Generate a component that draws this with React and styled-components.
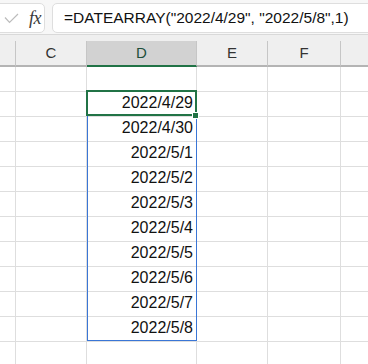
import React from "react";
import styled, { createGlobalStyle } from "styled-components";

const GlobalStyle = createGlobalStyle`
  html, body { margin: 0; padding: 0; background: #fff; }
  body { font-family: "Liberation Sans", Arial, sans-serif; }
`;

const COLS = [
    { name: "", width: 16 },
    { name: "C", width: 71 },
    { name: "D", width: 110, selected: true },
    { name: "E", width: 71 },
    { name: "F", width: 73 },
    { name: "", width: 27 },
];
const template = COLS.map((c) => c.width + "px").join(" ");

const dates = [
    "2022/4/29",
    "2022/4/30",
    "2022/5/1",
    "2022/5/2",
    "2022/5/3",
    "2022/5/4",
    "2022/5/5",
    "2022/5/6",
    "2022/5/7",
    "2022/5/8",
];

const Sheet = styled.div`
    width: 368px;
    height: 364px;
    overflow: hidden;
    background: #fff;
`;

const FormulaBar = styled.div`
    display: flex;
    gap: 7px;
    height: 34px;
    padding-top: 3px;
    box-sizing: border-box;
    background: #f7f7f7;
`;

const IconBox = styled.div`
    margin-left: -12px;
    width: 57px;
    height: 30px;
    box-sizing: border-box;
    display: flex;
    align-items: center;
    gap: 10px;
    padding-left: 15px;
    background: #fff;
    border: 1px solid #dedede;
    border-radius: 5px;
`;

const Fx = styled.span`
    font-family: "Liberation Serif", "Times New Roman", serif;
    font-style: italic;
    font-size: 18px;
    color: #3a3a3a;
    letter-spacing: -0.5px;
`;

const FormulaBox = styled.div`
    flex: 1;
    margin-right: -10px;
    height: 30px;
    box-sizing: border-box;
    padding-left: 11px;
    background: #fff;
    border: 1px solid #dedede;
    border-radius: 5px;
    font-size: 15.5px;
    line-height: 28px;
    color: #111;
    white-space: nowrap;
`;

const HeaderRow = styled.div`
    display: grid;
    grid-template-columns: ${template};
    background: #efefef;
    border-top: 1px solid #d9d9d9;
    padding-top: 6px;
`;

const HeaderCell = styled.div`
    height: 26px;
    box-sizing: border-box;
    border-right: ${(p) => (p.last ? "none" : "1px solid #c6c6c6")};
    border-bottom: 2px solid ${(p) => (p.selected ? "#217346" : "#b4b4b4")};
    background: ${(p) => (p.selected ? "#d2d2d2" : "transparent")};
    color: ${(p) => (p.selected ? "#1d4f3b" : "#333")};
    font-size: 15px;
    line-height: 24px;
    text-align: center;
`;

const Body = styled.div`
    position: relative;
`;

const Row = styled.div`
    display: grid;
    grid-template-columns: ${template};
    height: 25px;
`;

const Cell = styled.div`
    box-sizing: border-box;
    border-right: ${(p) => (p.last ? "none" : "1px solid #dedede")};
    border-bottom: 1px solid #dedede;
    padding-right: 3px;
    text-align: right;
    font-size: 16px;
    line-height: 22px;
    color: #111;
    white-space: nowrap;
`;

const Range = styled.div`
    position: absolute;
    left: 87px;
    top: 23px;
    width: 110px;
    height: 251px;
    box-sizing: border-box;
    border: 1px solid #3a76d6;
    pointer-events: none;
`;

const Active = styled.div`
    position: absolute;
    left: 86px;
    top: 23px;
    width: 111px;
    height: 26px;
    box-sizing: border-box;
    border: 2px solid #217346;
    pointer-events: none;
`;

const FillHandle = styled.div`
    position: absolute;
    left: 192px;
    top: 45px;
    width: 7px;
    height: 7px;
    box-sizing: border-box;
    background: #217346;
    border: 1px solid #fff;
`;

const CheckIcon = () => (
    <svg width="15" height="11" viewBox="0 0 15 11">
        <path d="M1 4.5 L5.5 9.5 L14 1" fill="none" stroke="#bcbcbc" strokeWidth="1.2" />
    </svg>
);

const App = () => {
    const rows = ["", ...dates, "", ""];

    return (
        <Sheet>
            <GlobalStyle />
            <FormulaBar>
                <IconBox>
                    <CheckIcon />
                    <Fx>fx</Fx>
                </IconBox>
                <FormulaBox>=DATEARRAY("2022/4/29", "2022/5/8",1)</FormulaBox>
            </FormulaBar>
            <HeaderRow>
                {COLS.map((c, i) => (
                    <HeaderCell key={i} selected={c.selected} last={i === COLS.length - 1}>
                        {c.name}
                    </HeaderCell>
                ))}
            </HeaderRow>
            <Body>
                {rows.map((val, r) => (
                    <Row key={r}>
                        {COLS.map((c, i) => (
                            <Cell key={i} last={i === COLS.length - 1}>
                                {c.selected ? val : ""}
                            </Cell>
                        ))}
                    </Row>
                ))}
                <Range />
                <Active />
                <FillHandle />
            </Body>
        </Sheet>
    );
};

export default App;
